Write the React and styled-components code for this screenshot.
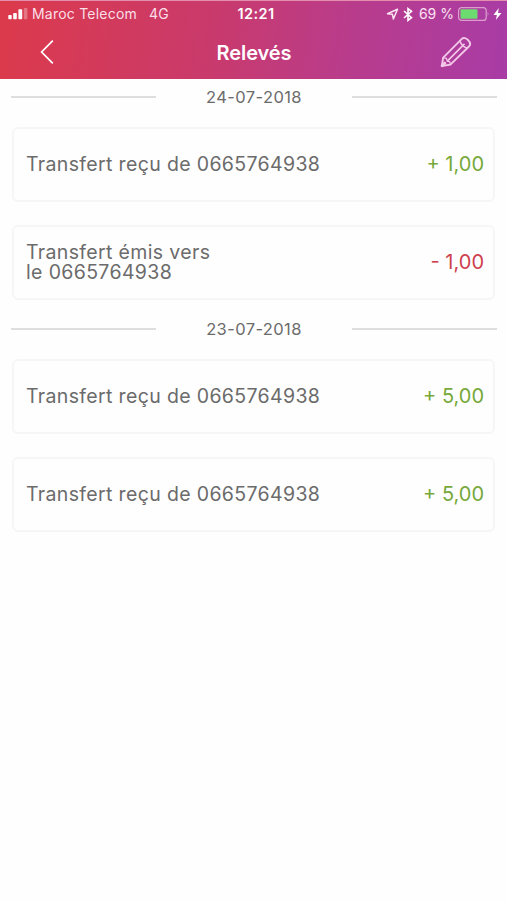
import React from 'react'
import styled, { createGlobalStyle } from 'styled-components'

const GlobalStyle = createGlobalStyle`
  * {
    box-sizing: border-box;
  }
  body {
    margin: 0;
    background: #fefefe;
    font-family: Inter, "Liberation Sans", sans-serif;
  }
`

const statements = [
  {
    date: '24-07-2018',
    items: [
      { label: 'Transfert reçu de 0665764938', amount: '+ 1,00' },
      { label: 'Transfert émis vers\nle 0665764938', amount: '- 1,00', debit: true },
    ],
  },
  {
    date: '23-07-2018',
    items: [
      { label: 'Transfert reçu de 0665764938', amount: '+ 5,00' },
      { label: 'Transfert reçu de 0665764938', amount: '+ 5,00' },
    ],
  },
]

const SignalIcon = () => (
  <svg width="20" height="12" viewBox="0 0 20 12" fill="#fff">
    <rect x="0.3" y="7" width="3.4" height="4.2" rx="0.8" />
    <rect x="5.2" y="5" width="3.6" height="6.2" rx="0.8" />
    <rect x="10.4" y="1.2" width="3.8" height="10" rx="0.8" />
    <rect x="15.8" y="0" width="3.6" height="11.2" rx="0.8" opacity="0.3" />
  </svg>
)

const LocationIcon = () => (
  <svg width="13" height="13" viewBox="0 0 13 13" fill="none" stroke="#fbe3f2" strokeWidth="1.5" strokeLinejoin="round">
    <path d="M11.5 1.2 L1.5 5.8 L6.4 6.3 L7.4 11 Z" />
  </svg>
)

const BluetoothIcon = () => (
  <svg width="10" height="15" viewBox="0 0 10 15" fill="none" stroke="#fff" strokeWidth="1.6">
    <path d="M1 4 L8.5 10.7 L5 13.4 V1.6 L8.5 4.3 L1 11" />
  </svg>
)

const BatteryIcon = () => (
  <svg width="32" height="14" viewBox="0 0 32 14">
    <rect x="0.6" y="0.6" width="27.6" height="12.8" rx="3" fill="none" stroke="#dc9fcd" strokeWidth="1.2" />
    <rect x="2.5" y="2.3" width="17" height="9.4" rx="1" fill="#6cdc70" />
    <path d="M29.7 4.8 Q31.3 7 29.7 9.2 Z" fill="#dc9fcd" />
  </svg>
)

const BoltIcon = () => (
  <svg width="9" height="12" viewBox="0 0 8 12" fill="#fff">
    <path d="M5.3 0 L0 7 H3.4 L2.3 12 L8 5 H4.5 Z" />
  </svg>
)

const BackIcon = () => (
  <svg width="14" height="24" viewBox="0 0 14 24" fill="none" stroke="#fff" strokeWidth="1.7">
    <path d="M12.8 0.6 L1.6 12 L12.8 23.4" />
  </svg>
)

const PencilIcon = () => (
  <svg width="32" height="32" viewBox="0 0 32 32" fill="none" stroke="#f2c6e6" strokeWidth="1.9" strokeLinejoin="round" strokeLinecap="round">
    <path d="M1.8 30 L3.2 21.7 L21.8 2.9 C25.2 -0.5 32.4 6.9 29.2 10.2 L10.4 28.6 Z" />
    <path d="M3.2 21.7 L6.4 22.4 L7.4 25.2 L9.8 25.8 L10.4 28.6" strokeWidth="1.3" />
    <path d="M7.6 24.8 L24 8.4" strokeWidth="1.7" />
    <path d="M19.8 5 C21 8 24 11.2 27.2 12.2" strokeWidth="1.6" />
    <path d="M2.2 29.6 L4.8 27.2" strokeWidth="3" />
  </svg>
)

const App = () => {
  return (
    <>
      <GlobalStyle />
      <Screen>
        <Header>
          <StatusBar>
            <Carrier>
              <SignalIcon />
              <span>Maroc Telecom</span>
              <Network>4G</Network>
            </Carrier>
            <Clock>12:21</Clock>
            <Indicators>
              <LocationIcon />
              <BluetoothIcon />
              <Percent>69 %</Percent>
              <BatteryIcon />
              <BoltIcon />
            </Indicators>
          </StatusBar>
          <NavBar>
            <NavButton aria-label="Retour">
              <BackIcon />
            </NavButton>
            <Title>Relevés</Title>
            <NavButton $right aria-label="Modifier">
              <PencilIcon />
            </NavButton>
          </NavBar>
        </Header>
        <main>
          {statements.map((group) => (
            <Group key={group.date}>
              <DateRow>
                <Line />
                <DateText>{group.date}</DateText>
                <Line />
              </DateRow>
              <Cards>
                {group.items.map((item, i) => (
                  <Card key={i}>
                    <Label>{item.label}</Label>
                    <Amount $debit={item.debit}>{item.amount}</Amount>
                  </Card>
                ))}
              </Cards>
            </Group>
          ))}
        </main>
      </Screen>
    </>
  )
}

export default App

const Screen = styled.div`
  min-height: 900px;
  background: #fefefe;
`

const Header = styled.header`
  height: 79px;
  border-top: 1px solid #e58fae;
  background: linear-gradient(97deg, #dc3a4b 0%, #c93a6c 42%, #b93c8b 68%, #a83ca6 100%);
  color: #fff;
`

const StatusBar = styled.div`
  display: grid;
  grid-template-columns: 1fr auto 1fr;
  align-items: center;
  height: 26px;
  padding: 0 5px 0 8px;
  font-size: 14px;
  line-height: 26px;
`

const Carrier = styled.div`
  display: flex;
  align-items: center;
  gap: 4px;
  color: #fbdfe8;
  letter-spacing: 0.22px;
  white-space: nowrap;
`

const Network = styled.span`
  margin-left: 8px;
  letter-spacing: 0.2px;
`

const Clock = styled.div`
  padding-left: 2px;
  font-size: 14.5px;
  font-weight: 600;
  letter-spacing: 0.4px;
`

const Indicators = styled.div`
  display: flex;
  align-items: center;
  justify-content: flex-end;
  gap: 3px;
  color: #fbe3f2;
  white-space: nowrap;

  svg:first-child {
    margin-right: 1px;
  }
`

const Percent = styled.span`
  padding: 0 1px 0 3px;
`

const NavBar = styled.div`
  display: grid;
  grid-template-columns: 1fr auto 1fr;
  align-items: center;
  height: 50px;
  padding: 0 35px 0 40px;
`

const NavButton = styled.button`
  display: flex;
  justify-self: ${(props) => (props.$right ? 'end' : 'start')};
  padding: 0;
  border: 0;
  background: none;
`

const Title = styled.h1`
  margin: 0;
  padding: 1px 4px 0 0;
  font-size: 20px;
  font-weight: 600;
  line-height: 24px;
  letter-spacing: -0.1px;
`

const Group = styled.section`
  & + & {
    margin-top: 11px;
  }
`

const DateRow = styled.div`
  display: flex;
  align-items: center;
  justify-content: space-between;
  height: 36px;
  padding: 0 10px 0 11px;
`

const Line = styled.div`
  width: 145px;
  height: 2px;
  background: #dedede;
`

const DateText = styled.div`
  color: #6b6b6b;
  font-size: 16.5px;
  letter-spacing: 0.4px;
`

const Cards = styled.div`
  display: flex;
  flex-direction: column;
  gap: 23px;
  padding: 12px 12px 0 12px;
`

const Card = styled.div`
  display: flex;
  align-items: center;
  justify-content: space-between;
  height: 75px;
  padding: 0 9px 2px 12px;
  border: 2px solid #f6f6f6;
  border-radius: 6px;
`

const Label = styled.div`
  color: #6b6b6b;
  font-size: 19.5px;
  line-height: 20px;
  letter-spacing: 0.35px;
  white-space: pre-line;
`

const Amount = styled.div`
  color: ${(props) => (props.$debit ? '#cf3f4e' : '#76a83a')};
  font-size: 20px;
`
